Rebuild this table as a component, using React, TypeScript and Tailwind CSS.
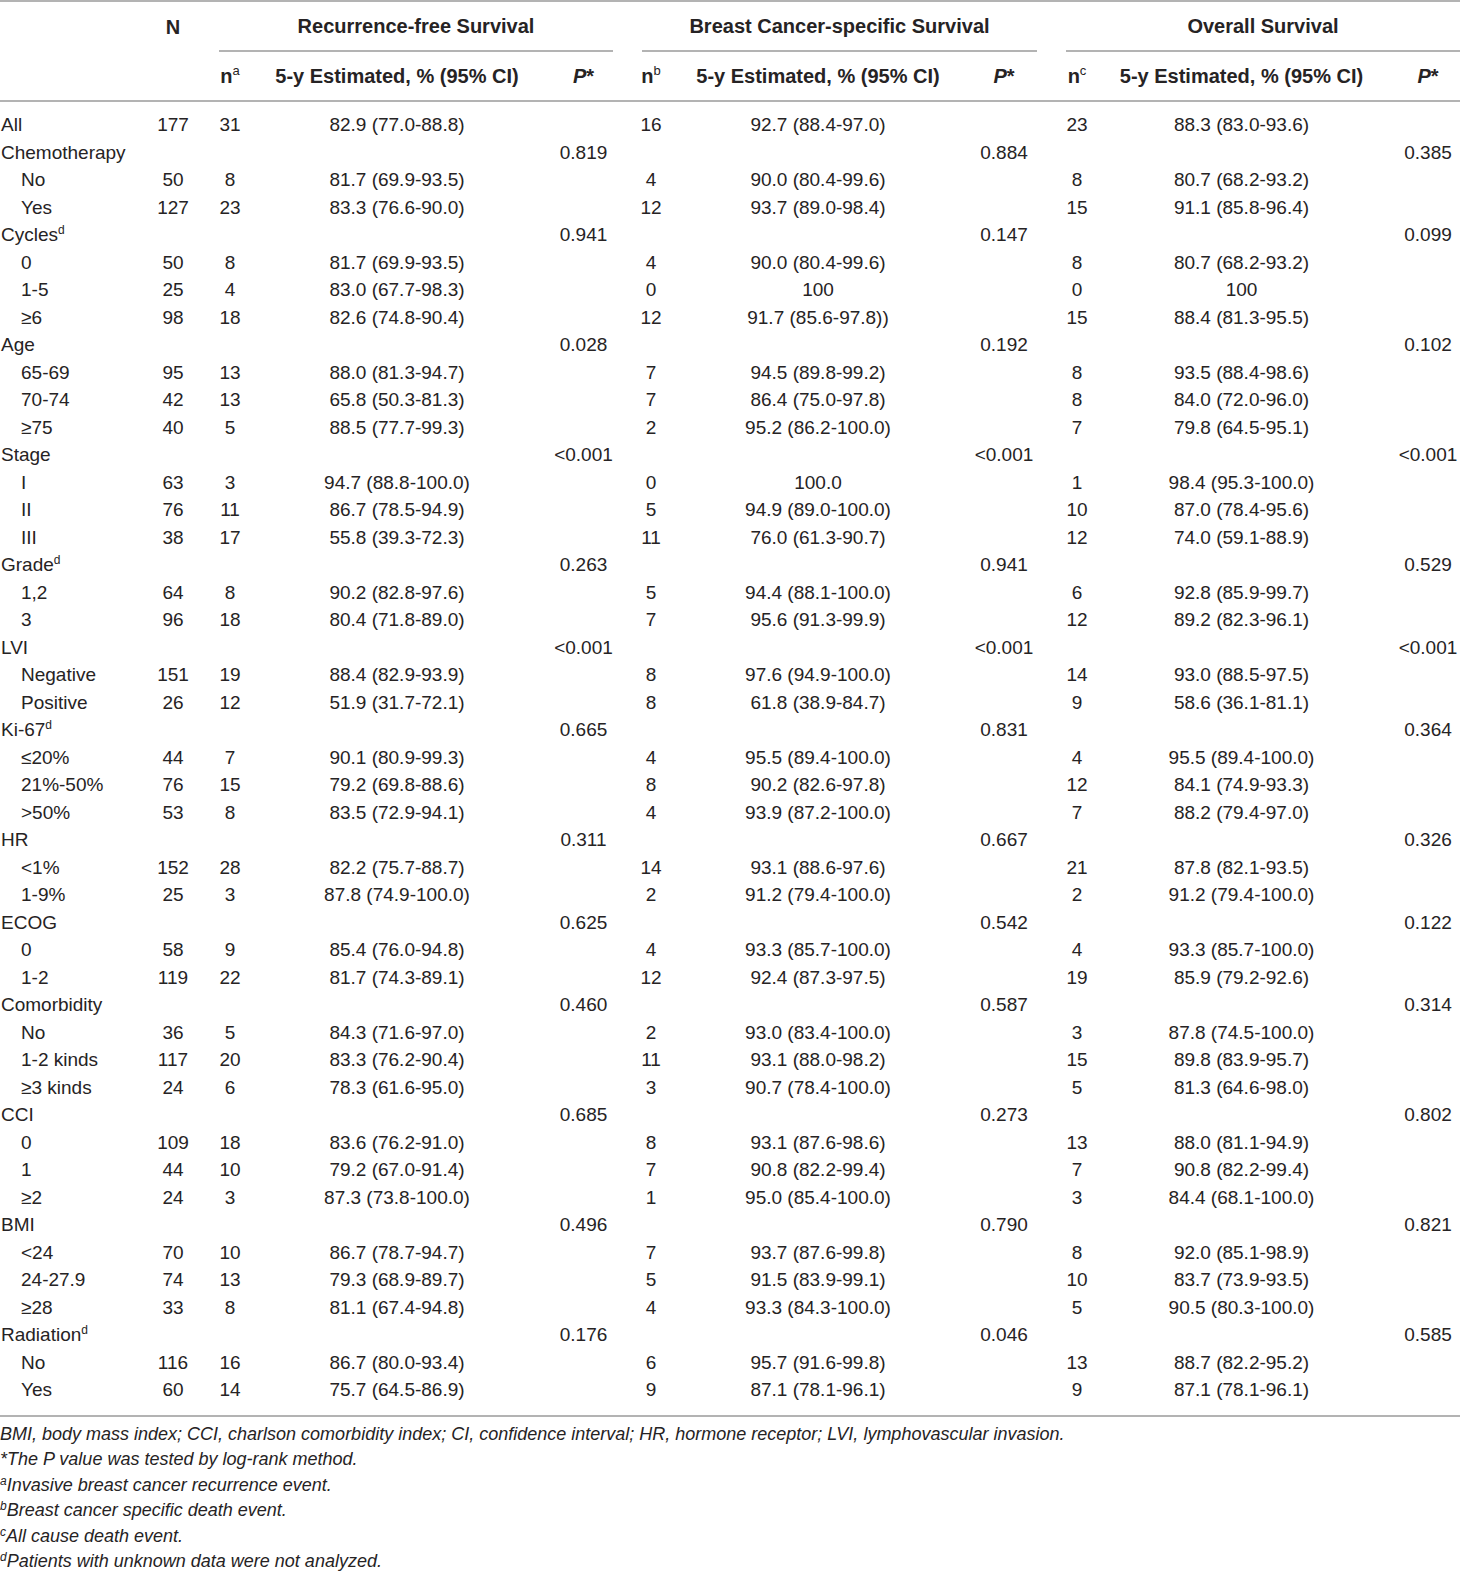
import React from "react";

const COLS =
  "grid grid-cols-[140px_66px_48px_286px_87px_48px_286px_90px_52px_277px_80px]";

type DRow = {
  k: "d";
  label: string;
  indent: boolean;
  N: string;
  v: string[];
};
type GRow = { k: "g"; label: string; sup?: string; p: string[] };
type Row = DRow | GRow;

const d = (label: string, N: string, ...v: string[]): DRow => ({
  k: "d",
  label,
  indent: true,
  N,
  v,
});
const g = (label: string, sup: string | undefined, ...p: string[]): GRow => ({
  k: "g",
  label,
  sup,
  p,
});

const rows: Row[] = [
  { k: "d", label: "All", indent: false, N: "177", v: ["31", "82.9 (77.0-88.8)", "16", "92.7 (88.4-97.0)", "23", "88.3 (83.0-93.6)"] },
  g("Chemotherapy", undefined, "0.819", "0.884", "0.385"),
  d("No", "50", "8", "81.7 (69.9-93.5)", "4", "90.0 (80.4-99.6)", "8", "80.7 (68.2-93.2)"),
  d("Yes", "127", "23", "83.3 (76.6-90.0)", "12", "93.7 (89.0-98.4)", "15", "91.1 (85.8-96.4)"),
  g("Cycles", "d", "0.941", "0.147", "0.099"),
  d("0", "50", "8", "81.7 (69.9-93.5)", "4", "90.0 (80.4-99.6)", "8", "80.7 (68.2-93.2)"),
  d("1-5", "25", "4", "83.0 (67.7-98.3)", "0", "100", "0", "100"),
  d("≥6", "98", "18", "82.6 (74.8-90.4)", "12", "91.7 (85.6-97.8))", "15", "88.4 (81.3-95.5)"),
  g("Age", undefined, "0.028", "0.192", "0.102"),
  d("65-69", "95", "13", "88.0 (81.3-94.7)", "7", "94.5 (89.8-99.2)", "8", "93.5 (88.4-98.6)"),
  d("70-74", "42", "13", "65.8 (50.3-81.3)", "7", "86.4 (75.0-97.8)", "8", "84.0 (72.0-96.0)"),
  d("≥75", "40", "5", "88.5 (77.7-99.3)", "2", "95.2 (86.2-100.0)", "7", "79.8 (64.5-95.1)"),
  g("Stage", undefined, "<0.001", "<0.001", "<0.001"),
  d("I", "63", "3", "94.7 (88.8-100.0)", "0", "100.0", "1", "98.4 (95.3-100.0)"),
  d("II", "76", "11", "86.7 (78.5-94.9)", "5", "94.9 (89.0-100.0)", "10", "87.0 (78.4-95.6)"),
  d("III", "38", "17", "55.8 (39.3-72.3)", "11", "76.0 (61.3-90.7)", "12", "74.0 (59.1-88.9)"),
  g("Grade", "d", "0.263", "0.941", "0.529"),
  d("1,2", "64", "8", "90.2 (82.8-97.6)", "5", "94.4 (88.1-100.0)", "6", "92.8 (85.9-99.7)"),
  d("3", "96", "18", "80.4 (71.8-89.0)", "7", "95.6 (91.3-99.9)", "12", "89.2 (82.3-96.1)"),
  g("LVI", undefined, "<0.001", "<0.001", "<0.001"),
  d("Negative", "151", "19", "88.4 (82.9-93.9)", "8", "97.6 (94.9-100.0)", "14", "93.0 (88.5-97.5)"),
  d("Positive", "26", "12", "51.9 (31.7-72.1)", "8", "61.8 (38.9-84.7)", "9", "58.6 (36.1-81.1)"),
  g("Ki-67", "d", "0.665", "0.831", "0.364"),
  d("≤20%", "44", "7", "90.1 (80.9-99.3)", "4", "95.5 (89.4-100.0)", "4", "95.5 (89.4-100.0)"),
  d("21%-50%", "76", "15", "79.2 (69.8-88.6)", "8", "90.2 (82.6-97.8)", "12", "84.1 (74.9-93.3)"),
  d(">50%", "53", "8", "83.5 (72.9-94.1)", "4", "93.9 (87.2-100.0)", "7", "88.2 (79.4-97.0)"),
  g("HR", undefined, "0.311", "0.667", "0.326"),
  d("<1%", "152", "28", "82.2 (75.7-88.7)", "14", "93.1 (88.6-97.6)", "21", "87.8 (82.1-93.5)"),
  d("1-9%", "25", "3", "87.8 (74.9-100.0)", "2", "91.2 (79.4-100.0)", "2", "91.2 (79.4-100.0)"),
  g("ECOG", undefined, "0.625", "0.542", "0.122"),
  d("0", "58", "9", "85.4 (76.0-94.8)", "4", "93.3 (85.7-100.0)", "4", "93.3 (85.7-100.0)"),
  d("1-2", "119", "22", "81.7 (74.3-89.1)", "12", "92.4 (87.3-97.5)", "19", "85.9 (79.2-92.6)"),
  g("Comorbidity", undefined, "0.460", "0.587", "0.314"),
  d("No", "36", "5", "84.3 (71.6-97.0)", "2", "93.0 (83.4-100.0)", "3", "87.8 (74.5-100.0)"),
  d("1-2 kinds", "117", "20", "83.3 (76.2-90.4)", "11", "93.1 (88.0-98.2)", "15", "89.8 (83.9-95.7)"),
  d("≥3 kinds", "24", "6", "78.3 (61.6-95.0)", "3", "90.7 (78.4-100.0)", "5", "81.3 (64.6-98.0)"),
  g("CCI", undefined, "0.685", "0.273", "0.802"),
  d("0", "109", "18", "83.6 (76.2-91.0)", "8", "93.1 (87.6-98.6)", "13", "88.0 (81.1-94.9)"),
  d("1", "44", "10", "79.2 (67.0-91.4)", "7", "90.8 (82.2-99.4)", "7", "90.8 (82.2-99.4)"),
  d("≥2", "24", "3", "87.3 (73.8-100.0)", "1", "95.0 (85.4-100.0)", "3", "84.4 (68.1-100.0)"),
  g("BMI", undefined, "0.496", "0.790", "0.821"),
  d("<24", "70", "10", "86.7 (78.7-94.7)", "7", "93.7 (87.6-99.8)", "8", "92.0 (85.1-98.9)"),
  d("24-27.9", "74", "13", "79.3 (68.9-89.7)", "5", "91.5 (83.9-99.1)", "10", "83.7 (73.9-93.5)"),
  d("≥28", "33", "8", "81.1 (67.4-94.8)", "4", "93.3 (84.3-100.0)", "5", "90.5 (80.3-100.0)"),
  g("Radiation", "d", "0.176", "0.046", "0.585"),
  d("No", "116", "16", "86.7 (80.0-93.4)", "6", "95.7 (91.6-99.8)", "13", "88.7 (82.2-95.2)"),
  d("Yes", "60", "14", "75.7 (64.5-86.9)", "9", "87.1 (78.1-96.1)", "9", "87.1 (78.1-96.1)"),
];

function Line() {
  return <div className="h-[2px] w-full bg-[#b3b3b3]" />;
}

function BodyRow({ row }: { row: Row }) {
  if (row.k === "g") {
    return (
      <div className={`${COLS} h-[27.5px] items-center`}>
        <div className="pl-[1px] whitespace-nowrap">
          {row.label}
          {row.sup && <sup className="text-[12px] -top-[7px]">{row.sup}</sup>}
        </div>
        <div />
        <div />
        <div />
        <div className="text-center">{row.p[0]}</div>
        <div />
        <div />
        <div className="text-center pr-[4px]">{row.p[1]}</div>
        <div />
        <div />
        <div className="text-center pl-[16px]">{row.p[2]}</div>
      </div>
    );
  }
  const v = row.v;
  return (
    <div className={`${COLS} h-[27.5px] items-center`}>
      <div className={row.indent ? "pl-[21px] whitespace-nowrap" : "pl-[1px] whitespace-nowrap"}>
        {row.label}
      </div>
      <div className="text-center">{row.N}</div>
      <div className="text-center">{v[0]}</div>
      <div className="text-center">{v[1]}</div>
      <div />
      <div className="text-center">{v[2]}</div>
      <div className="text-center">{v[3]}</div>
      <div />
      <div className="text-center">{v[4]}</div>
      <div className="text-center">{v[5]}</div>
      <div />
    </div>
  );
}

function NHead({ s }: { s: string }) {
  return (
    <div className="text-center whitespace-nowrap">
      n<sup className="text-[13px] font-normal -top-[8px]">{s}</sup>
    </div>
  );
}

function PHead({ cls }: { cls: string }) {
  return (
    <div className={cls}>
      <i>P</i>*
    </div>
  );
}

export default function App() {
  return (
    <div className="w-[1460px] min-h-[1574px] bg-white text-[#262324] font-['Liberation_Sans',Arial,sans-serif] text-[19px]">
      <Line />
      {/* header row 1 */}
      <div className={`${COLS} h-[50px] items-stretch font-bold text-[20px]`}>
        <div />
        <div className="flex items-center justify-center">N</div>
        <div className="col-span-3 flex flex-col pl-[13px] pr-[14px]">
          <div className="flex-1 flex items-center justify-center">
            Recurrence-free Survival
          </div>
          <Line />
        </div>
        <div className="col-span-3 flex flex-col pl-[15px] pr-[14px]">
          <div className="flex-1 flex items-center justify-center">
            Breast Cancer-specific Survival
          </div>
          <Line />
        </div>
        <div className="col-span-3 flex flex-col pl-[15px]">
          <div className="flex-1 flex items-center justify-center">
            Overall Survival
          </div>
          <Line />
        </div>
      </div>
      {/* header row 2 */}
      <div className={`${COLS} h-[48px] items-center font-bold text-[20px]`}>
        <div />
        <div />
        <NHead s="a" />
        <div className="text-center whitespace-nowrap">5-y Estimated, % (95% CI)</div>
        <PHead cls="text-center" />
        <NHead s="b" />
        <div className="text-center whitespace-nowrap">5-y Estimated, % (95% CI)</div>
        <PHead cls="text-center pr-[4px]" />
        <NHead s="c" />
        <div className="text-center whitespace-nowrap">5-y Estimated, % (95% CI)</div>
        <PHead cls="text-center pl-[16px]" />
      </div>
      <Line />
      <div className="pt-[9px] pb-[11px]">
        {rows.map((r, i) => (
          <BodyRow key={i} row={r} />
        ))}
      </div>
      <Line />
      <div className="pt-[5px] italic text-[18px] leading-[25.6px]">
        <div>
          BMI, body mass index; CCI, charlson comorbidity index; CI, confidence
          interval; HR, hormone receptor; LVI, lymphovascular invasion.
        </div>
        <div>*The P value was tested by log-rank method.</div>
        <div>
          <sup className="text-[12px]">a</sup>Invasive breast cancer recurrence
          event.
        </div>
        <div>
          <sup className="text-[12px]">b</sup>Breast cancer specific death event.
        </div>
        <div>
          <sup className="text-[12px]">c</sup>All cause death event.
        </div>
        <div>
          <sup className="text-[12px]">d</sup>Patients with unknown data were not
          analyzed.
        </div>
      </div>
    </div>
  );
}
